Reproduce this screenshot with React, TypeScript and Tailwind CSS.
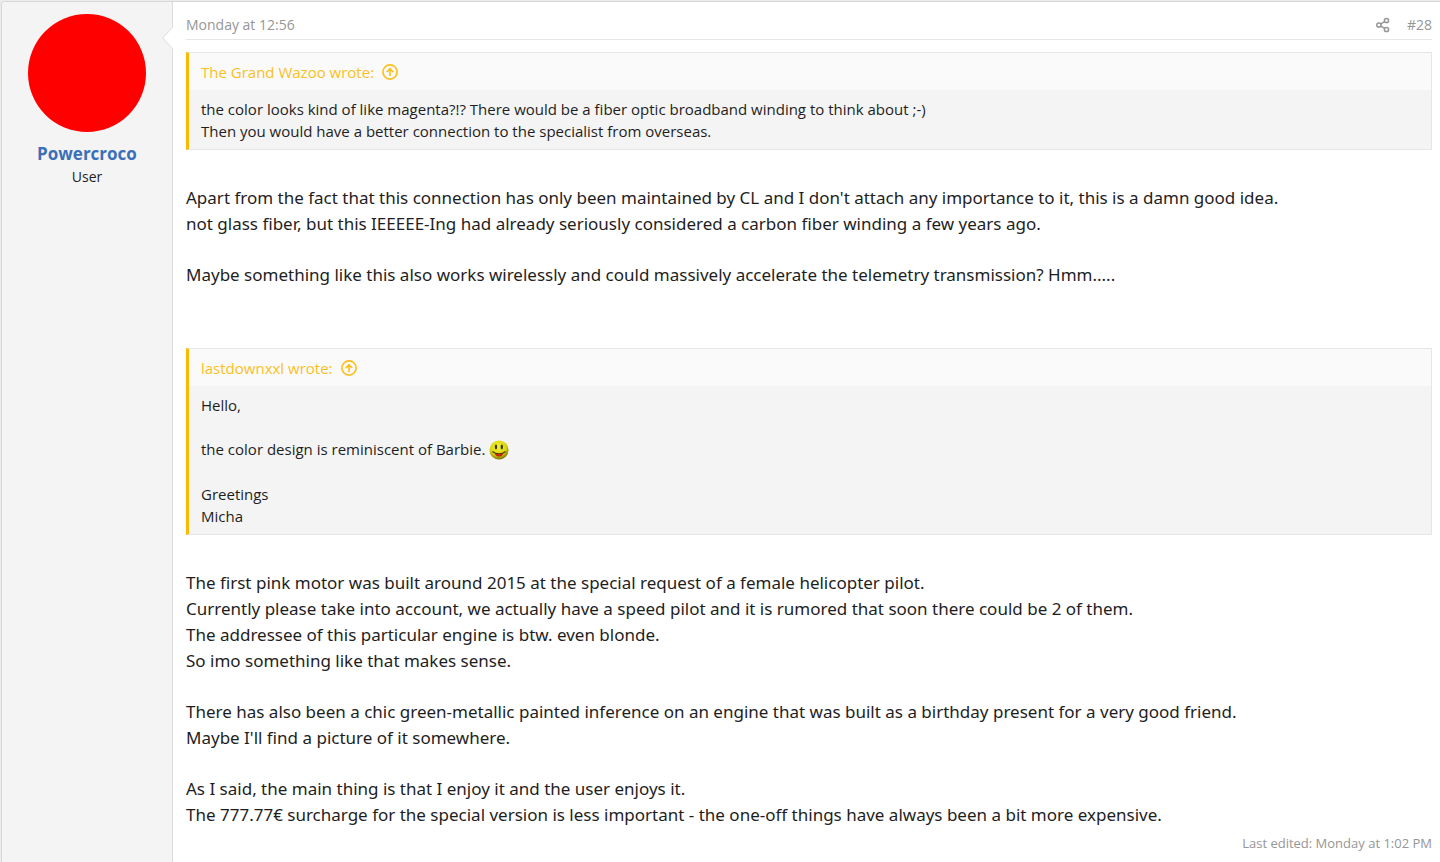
import type { ReactNode } from "react";

function ArrowIcon() {
  return (
    <svg viewBox="0 0 16 16" className="size-4" fill="none" stroke="currentColor" strokeWidth="1.7">
      <circle cx="8" cy="8" r="7.1" />
      <path d="M8 12V4.8M4.8 8 8 4.8 11.2 8" />
    </svg>
  );
}

function ShareIcon() {
  return (
    <svg viewBox="0 0 14 16" className="h-4 w-3.5" fill="none" stroke="currentColor" strokeWidth="1.5">
      <circle cx="2.9" cy="8" r="2.1" />
      <circle cx="10.5" cy="3.5" r="2.1" />
      <circle cx="10.5" cy="12.5" r="2.1" />
      <path d="M4.8 6.9 8.7 4.6M4.8 9.1 8.7 11.4" />
    </svg>
  );
}

function Smiley() {
  return (
    <svg viewBox="0 0 20 20" className="ml-1 inline-block size-5 align-[-5px]" role="img" aria-label="smile">
      <defs>
        <radialGradient id="face" cx="0.45" cy="0.35" r="0.65">
          <stop offset="0" stopColor="#f4f03a" />
          <stop offset="0.65" stopColor="#dcd60c" />
          <stop offset="1" stopColor="#77720a" />
        </radialGradient>
      </defs>
      <circle cx="10" cy="10" r="9.5" fill="url(#face)" />
      <ellipse cx="7" cy="7" rx="1.2" ry="2.4" fill="#3a3808" />
      <ellipse cx="12.8" cy="7" rx="1.2" ry="2.4" fill="#3a3808" />
      <path d="M3.4 11.4Q10 16.4 16.6 11.4" fill="none" stroke="#4a3c08" strokeWidth="1.2" />
      <path d="M5.6 13.2Q10 15.4 14.4 13.2Q13.2 16.6 10 16.6Q6.8 16.6 5.6 13.2Z" fill="#c8200c" />
    </svg>
  );
}

function Quote({ author, children }: { author: string; children: ReactNode }) {
  return (
    <blockquote className="border border-l-3 border-[#e6e6e6] border-l-[#fcb900] bg-[#f4f4f4] font-['Open_Sans',sans-serif]">
      <div className="flex h-[37px] items-center bg-[#fafafa] px-3 text-[15px] text-[#fcbf1e]">
        <a href="#source" className="flex items-center gap-2">
          {author} wrote: <ArrowIcon />
        </a>
      </div>
      <div className="px-3 pt-2 pb-[7px] text-[15px] leading-[22px]">{children}</div>
    </blockquote>
  );
}

export default function App() {
  return (
    <div className="min-h-screen bg-[#ebebeb] pt-px pl-px font-['Open_Sans','Noto_Sans',sans-serif] text-[#1e1e1e]">
      <article className="flex min-h-[calc(100vh-1px)] rounded-tl border-t border-l border-[#d8d8d8] bg-white">
        <aside className="relative w-[171px] shrink-0 rounded-tl border-r border-[#dcdcdc] bg-[#f4f4f4] pt-3 text-center">
          <div className="mx-auto size-[118px] rounded-full bg-[#ff0000]" />
          <h4 className="mt-2.5 text-[17px] leading-6 font-bold text-[#3b6fb9]">
            <a href="#user">Powercroco</a>
          </h4>
          <h5 className="text-sm leading-[22px]">User</h5>
          <svg viewBox="0 0 11 22" className="absolute top-[25px] -right-px h-[22px] w-[11px]">
            <path d="M11 0 0.7 11 11 22Z" fill="#fff" />
            <path d="M10.5 0.5 0.7 11 10.5 21.5" fill="none" stroke="#dcdcdc" />
          </svg>
        </aside>

        <div className="min-w-0 flex-1 pt-3 pr-2 pb-2 pl-[13px]">
          <header className="flex h-[26px] items-center justify-between border-b border-[#e6e6e6] pb-1 text-sm text-[#969696]">
            <a href="#post">
              <time>Monday at 12:56</time>
            </a>
            <div className="flex items-center gap-[17px]">
              <a href="#share" aria-label="Share">
                <ShareIcon />
              </a>
              <a href="#post">#28</a>
            </div>
          </header>

          <div className="mt-3 font-['Noto_Sans',sans-serif] text-[17px] leading-[26px]">
            <Quote author="The Grand Wazoo">
              <p>
                the color looks kind of like magenta?!? There would be a fiber optic broadband winding to think about ;-)
                <br />
                Then you would have a better connection to the specialist from overseas.
              </p>
            </Quote>

            <div className="mt-[35px] space-y-[25px]">
              <p>
                Apart from the fact that this connection has only been maintained by CL and I don't attach any importance to it, this is a damn good idea.
                <br />
                not glass fiber, but this IEEEEE-Ing had already seriously considered a carbon fiber winding a few years ago.
              </p>
              <p>Maybe something like this also works wirelessly and could massively accelerate the telemetry transmission? Hmm.....</p>
            </div>

            <div className="mt-[60px]">
              <Quote author="lastdownxxl">
                <div className="space-y-[22px]">
                  <p>Hello,</p>
                  <p className="h-[23px] leading-[23px]">
                    the color design is reminiscent of Barbie.
                    <Smiley />
                  </p>
                  <p>
                    Greetings
                    <br />
                    Micha
                  </p>
                </div>
              </Quote>
            </div>

            <div className="mt-[35px] space-y-[25px]">
              <p>
                The first pink motor was built around 2015 at the special request of a female helicopter pilot.
                <br />
                Currently please take into account, we actually have a speed pilot and it is rumored that soon there could be 2 of them.
                <br />
                The addressee of this particular engine is btw. even blonde.
                <br />
                So imo something like that makes sense.
              </p>
              <p>
                There has also been a chic green-metallic painted inference on an engine that was built as a birthday present for a very good friend.
                <br />
                Maybe I'll find a picture of it somewhere.
              </p>
              <p>
                As I said, the main thing is that I enjoy it and the user enjoys it.
                <br />
                The 777.77€ surcharge for the special version is less important - the one-off things have always been a bit more expensive.
              </p>
            </div>
          </div>

          <footer className="mt-1 text-right text-[13px] leading-[22px] text-[#969696]">Last edited: Monday at 1:02 PM</footer>
        </div>
      </article>
    </div>
  );
}
